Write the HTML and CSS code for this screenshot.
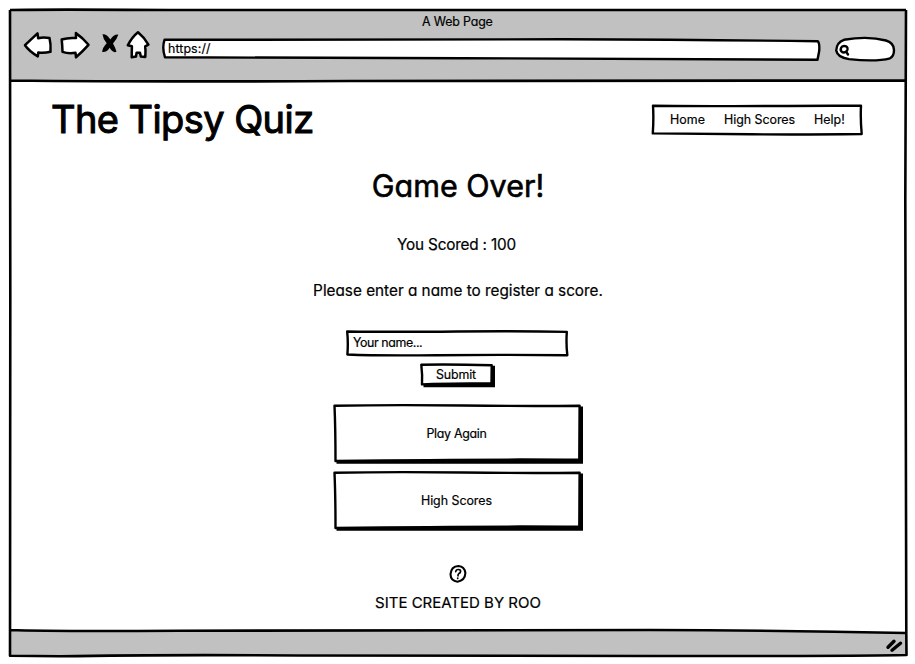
FILE: index.html
```html
<!DOCTYPE html>
<html lang="en">
<head>
<meta charset="utf-8">
<title>The Tipsy Quiz</title>
<link rel="stylesheet" href="styles.css">
</head>
<body>
<div class="window">
  <svg class="frame" viewBox="0 0 915 664" aria-hidden="true">
    <path class="gray" d="M10 10H906V80.5H10ZM10 630L600 630Q800 629 906 633V655L600 656Q400 655 300 654.5L60 656 10 655Z"/>
    <path class="line" d="M10 10Q45 9.3 170 10L906 10M906 10L905.3 200 906.3 633 906.5 655Q850 656.2 650 656L300 655.5Q160 654.5 60 656.3L10 655.7L10.3 300 10 10M10 80.5Q150 82 350 81L906 80.5M10 630Q50 631.5 180 630.7L650 630Q780 630.3 906 633"/>
    <path class="resize" d="M888 647.3L894 641.2M892 650.2L900.5 643.2"/>
  </svg>
  <header class="chrome">
    <div class="chrome-title"><span class="t-chrome">A Web Page</span></div>
    <div class="toolbar">
      <svg class="nav-icons" viewBox="0 0 132 32" aria-hidden="true">
        <path class="icon" d="M5 16.2L17.5 4.3 18.2 9.3Q23 7.7 29.5 9Q31 15 30.5 22.8Q24 24.4 18.3 23.5L17.8 27.4Q9 22 5 16.2Z"/>
        <path class="icon" d="M41.7 10.5Q48 8.4 56 9.1L55.9 4.1Q63 9 68.5 15.8Q63 22 56 28.3L55.5 23.8Q48 24.8 42.5 22.8Q42.3 16 41.7 10.5Z"/>
        <path d="M82.5 5.2Q86.5 4.5 90.4 10.5Q94 5 98.3 5.7Q97 10 93 14.5Q95.5 19 96.5 22.8Q93 24.5 89.7 18.8Q87 23.5 82.2 23Q82.5 18.5 86.7 14.3Q83 10 82.5 5.2Z"/>
        <path class="icon" d="M118 3.2Q124 8 128.4 15.6L125.2 17.3Q125.8 22 125.3 28L120.8 27.5L120 23.8H116.6L116 27.5L111.7 28.3Q111.8 22 111.9 17.3L107.8 16.3Q112 8 118 3.2Z"/>
      </svg>
      <div class="address">
        <svg class="outline" viewBox="0 0 660 24" aria-hidden="true"><path d="M2.5 2.8Q200 2 400 2.3Q550 2.8 655.7 4.3Q657.8 6 657.2 14L655.5 22.8Q450 22.5 300 21.2Q100 21 3 20.3Q-.2 11 2.5 2.8Z"/></svg>
        <span class="t-url">https://</span>
      </div>
      <svg class="search" viewBox="0 0 62 28" aria-hidden="true">
        <path d="M10 4.8Q34 .7 52 5.5Q60 8 60 15Q60 21.2 56 23.3Q42 27 15 24.1Q3.5 22.5 2.2 15.5Q2.5 7.5 10 4.8Z"/>
        <path class="lens" d="M10.5 11Q14 11.3 13.5 14.5Q12.5 18 8.7 17.3Q5.8 16 7 13Q8 10.7 10.5 11ZM12.2 16.8L14 19.5"/>
      </svg>
    </div>
  </header>
  <main class="page">
    <div class="banner">
      <h1 class="t-title">The Tipsy Quiz</h1>
      <nav class="menu">
        <svg class="outline" viewBox="0 0 212 32" aria-hidden="true"><path d="M2 2.7Q70 3.4 120 3T210 2.8Q209.3 16 210.7 31Q150 31.8 100 31.3T1.8 30.4Q2.8 15 2 2.7Z"/></svg>
        <a class="t-home">Home</a><a class="t-scores">High Scores</a><a class="t-help">Help!</a>
      </nav>
    </div>
    <section class="result">
      <h2 class="t-over">Game Over!</h2>
      <p class="score t-score">You Scored : 100</p>
      <p class="prompt t-prompt">Please enter a name to register a score.</p>
      <div class="field">
        <svg class="outline" viewBox="0 0 222 26" aria-hidden="true"><path d="M.2 1.5Q45 2.1 110 1.5T219.8 1.9Q219 14 220.3 25.2Q150 24.6 90 25.2T.4 24.5Q1.3 13 .2 1.5Z"/></svg>
        <span class="t-name">Your name...</span>
      </div>
      <div class="button submit">
        <svg class="outline" viewBox="0 0 76 25" aria-hidden="true"><path class="shadow" d="M3.5 21H71V2.8H75V24.2H3.5Z"/><path d="M1.3 1.7Q30 1 71.7 2.3L71.5 20.3Q45 20.3 2 21.4Q2.5 12 1.3 1.7Z"/></svg>
        <span class="t-submit">Submit</span>
      </div>
      <div class="button play">
        <svg class="outline" viewBox="0 0 250 60" aria-hidden="true"><path class="shadow" d="M3.5 56H246V2.5H250V59.8H3.5Z"/><path d="M1.5 1.7Q60 .7 130 1.5T246.6 1.7L246.3 55.8Q150 55 2.5 57Q2.5 25 1.5 1.7Z"/></svg>
        <span class="t-play">Play Again</span>
      </div>
      <div class="button high">
        <svg class="outline" viewBox="0 0 250 60" aria-hidden="true"><path class="shadow" d="M3.5 56H246V2.5H250V59.8H3.5Z"/><path d="M1.5 1.7Q60 .7 130 1.5T246.6 1.7L246.3 55.8Q150 55 2.5 57Q2.5 25 1.5 1.7Z"/></svg>
        <span class="t-high">High Scores</span>
      </div>
    </section>
    <footer class="credit">
      <svg class="help" viewBox="0 0 20 20" aria-hidden="true"><path class="ring" d="M10.5 2Q16.5 2.5 17.4 9Q17 16.5 9.5 17.7Q2.7 17 2.5 10.3Q3 2.5 10.5 2Z"/><path class="question" d="M7.7 7.7Q8 5.4 10.4 5.5Q13 5.7 12.5 7.8Q12.2 9 10.8 9.6Q9.9 10.2 10 11.8M9.7 14.1V14.4"/></svg>
      <p class="t-credit">SITE CREATED BY ROO</p>
    </footer>
  </main>
</div>
</body>
</html>
```
FILE: styles.css
```css
* { box-sizing: border-box; }
html, body { margin: 0; overflow: hidden; background: #fff; }
body {
  font-family: Inter, "Open Sans", sans-serif;
  font-feature-settings: "cv11" 1, "ss03" 1;
  font-size: 12.4px;
  font-weight: 400;
  color: #000;
  -webkit-text-stroke: .2px #000;
}
h1, h2, p { margin: 0; font-weight: 400; white-space: nowrap; }
a, span { white-space: nowrap; }
svg { display: block; overflow: visible; }
.window { position: relative; width: 915px; height: 664px; }
.frame { position: absolute; inset: 0; width: 915px; height: 664px; }
.gray { fill: #c1c1c1; }
.line { fill: none; stroke: #000; stroke-width: 2.6; stroke-linejoin: round; }
.resize { fill: none; stroke: #000; stroke-width: 3.4; stroke-linecap: round; }
.chrome { position: relative; height: 81px; padding: 12px 19px 0 20px; }
.chrome-title { height: 20px; line-height: 20px; padding-left: 402px; }
.toolbar { display: flex; align-items: flex-start; }
.nav-icons { width: 132px; height: 32px; margin-top: -3px; }
.icon { fill: #fff; stroke: #000; stroke-width: 2.5; stroke-linejoin: round; }
.address { position: relative; width: 660px; height: 24px; margin: 5px 0 0 10px; padding-left: 6px; line-height: 24px; }
.outline { position: absolute; inset: 0; width: 100%; height: 100%; }
.outline path, .search path { fill: #fff; stroke: #000; stroke-width: 2.4; stroke-linejoin: round; }
.outline .shadow { fill: #000; stroke: none; }
.outline ~ * { position: relative; }
.search { width: 62px; height: 28px; margin: 3px 0 0 12px; }
.search .lens { fill: none; stroke-linecap: round; }
.page { position: relative; padding-left: 51px; }
.banner { display: flex; justify-content: space-between; padding: 14px 52px 0 0; height: 75px; }
.menu { position: relative; width: 212px; height: 32px; margin-top: 8px; padding: 0 19px; display: grid; grid-template-columns: 54px 90px 40px; line-height: 33px; }
.result { display: flex; flex-direction: column; align-items: center; width: 814px; }
.score { margin-top: 19px; padding-right: 3px; }
.prompt { margin-top: 26px; }
.field { position: relative; width: 222px; height: 26px; margin-top: 29px; padding-left: 6px; line-height: 25px; }
.button { position: relative; display: flex; justify-content: center; }
.submit { width: 76px; height: 25px; margin-top: 7px; padding-right: 4px; line-height: 23px; }
.play, .high { width: 250px; height: 60px; padding-right: 3px; line-height: 60px; }
.play { margin-top: 16px; }
.high { margin-top: 7px; }
.credit { display: flex; flex-direction: column; align-items: center; width: 814px; margin-top: 33px; }
.help { width: 20px; height: 20px; }
.ring { fill: none; stroke: #000; stroke-width: 2.1; }
.question { fill: none; stroke: #000; stroke-width: 1.7; stroke-linecap: round; }
.t-title { font-size: 38px; line-height: 48px; letter-spacing: -.58px; -webkit-text-stroke: 1px #000; }
.t-over { font-size: 30.5px; line-height: 60px; -webkit-text-stroke: .6px #000; }
.t-score, .t-prompt { font-size: 15.3px; line-height: 20px; }
.t-score { letter-spacing: -.18px; }
.t-prompt { letter-spacing: 0; }
.t-chrome { letter-spacing: -.15px; }
.t-url { letter-spacing: .1px; }
.t-home, .t-help { letter-spacing: .05px; }
.t-scores, .t-high { letter-spacing: -.02px; }
.t-name { letter-spacing: -.4px; }
.t-submit { letter-spacing: -.15px; }
.t-play { letter-spacing: -.3px; }
.t-credit { font-size: 15px; line-height: 20px; margin-top: 9px; }
```
